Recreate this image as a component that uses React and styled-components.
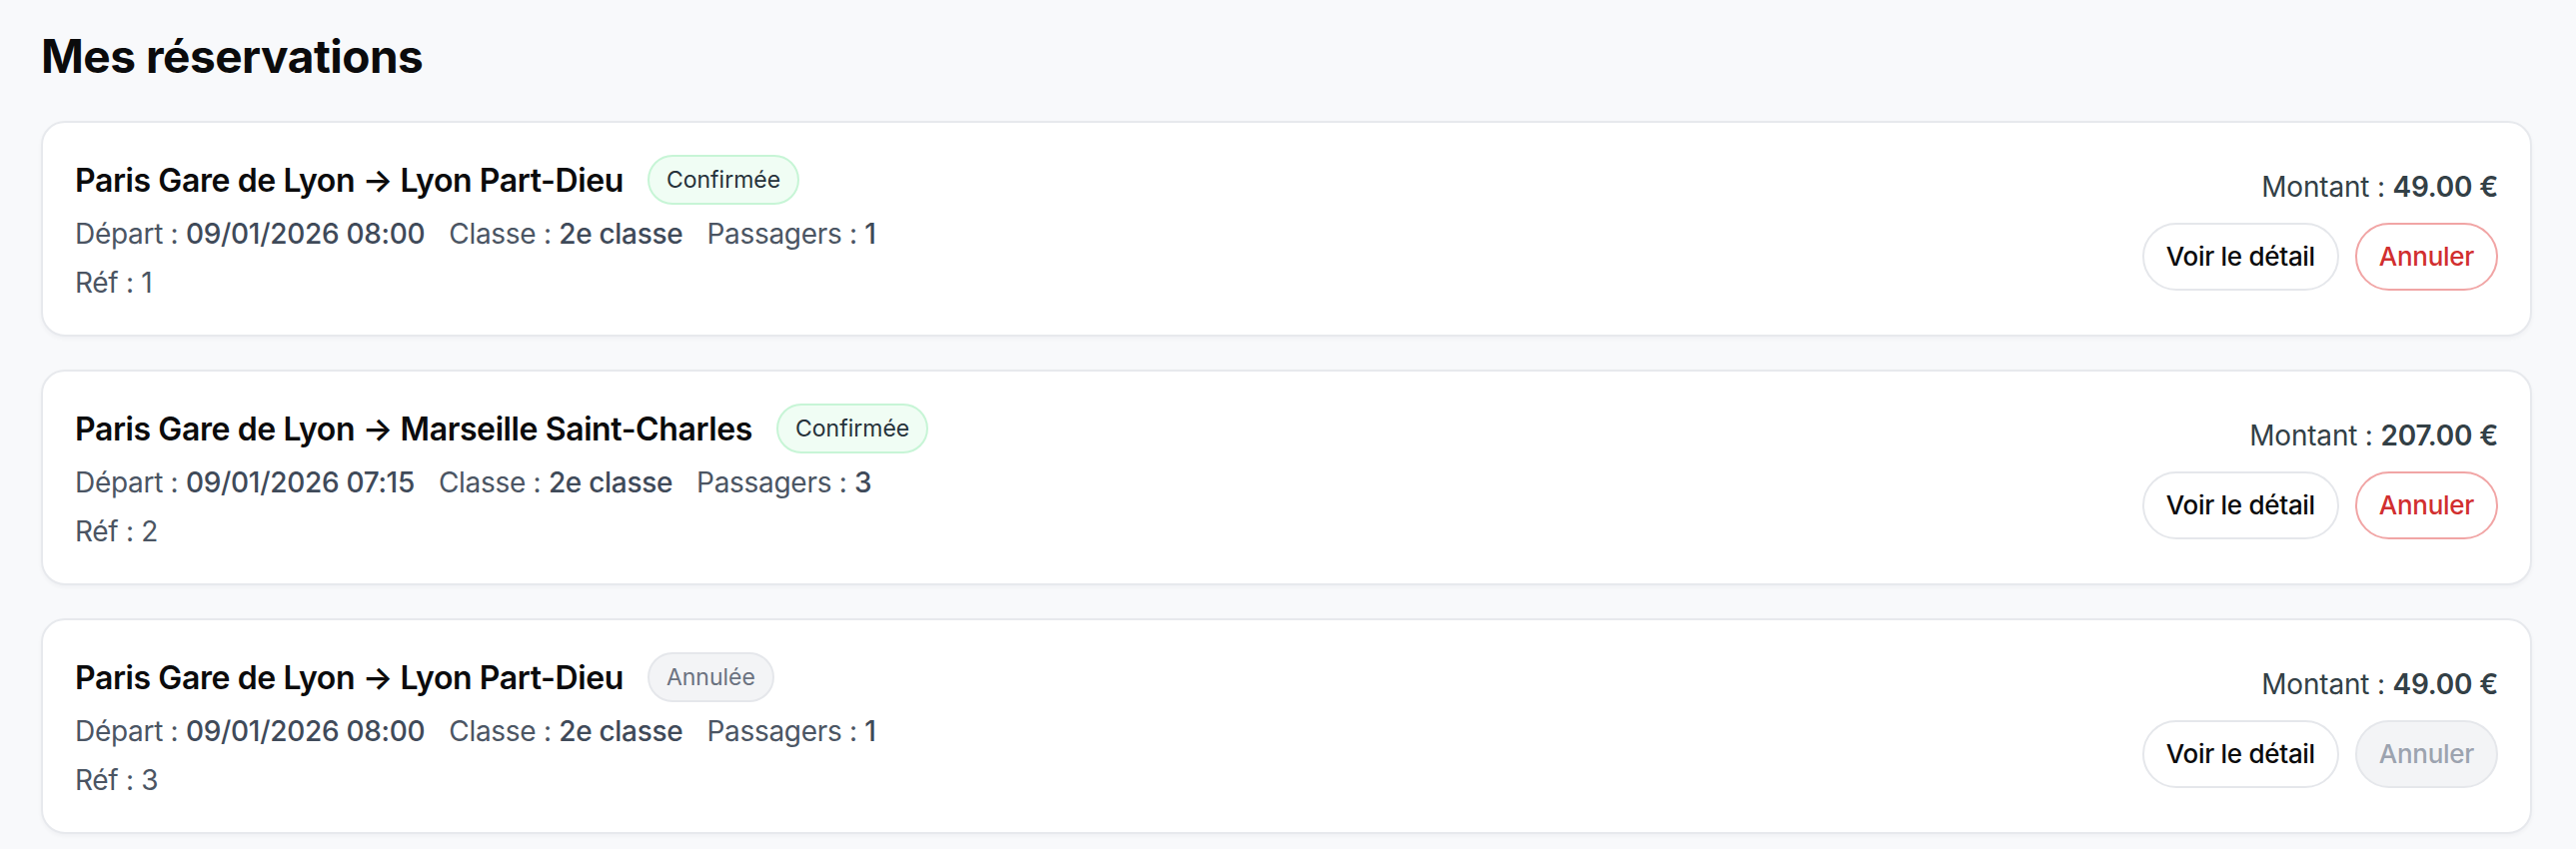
import React from "react";
import styled, { createGlobalStyle } from "styled-components";

const GlobalStyle = createGlobalStyle`
  html, body {
    margin: 0;
    padding: 0;
    background: #f8f9fb;
  }
  body {
    font-family: Inter, "Noto Sans", "Liberation Sans", sans-serif;
    color: #111827;
  }
`;

const Page = styled.main`
  padding: 28px 44px 40px 41px;
`;

const Title = styled.h1`
  font-size: 46px;
  font-weight: 700;
  letter-spacing: -0.5px;
  margin: 0 0 37px;
  color: #0b0b0c;
`;

const List = styled.div`
  display: flex;
  flex-direction: column;
  gap: 33px;
`;

const Card = styled.article`
  display: flex;
  align-items: center;
  justify-content: space-between;
  background: #ffffff;
  border: 2px solid #e7e9ed;
  border-radius: 24px;
  padding: 32px;
  box-shadow: 0 2px 4px rgba(17, 24, 39, 0.04);
`;

const Info = styled.div`
  display: flex;
  flex-direction: column;
`;

const Heading = styled.div`
  display: flex;
  align-items: center;
  gap: 24px;
  height: 50px;
`;

const Route = styled.h2`
  margin: 0;
  font-size: 32px;
  font-weight: 600;
  letter-spacing: -0.4px;
  color: #0b0b0c;
`;

const Badge = styled.span`
  display: inline-flex;
  align-items: center;
  height: 50px;
  box-sizing: border-box;
  padding: 0 17px;
  border-radius: 999px;
  font-size: 23px;
  font-weight: 400;
  border: 2px solid ${p => (p.$cancelled ? "#e5e7eb" : "#c7f5d6")};
  background: ${p => (p.$cancelled ? "#f3f4f6" : "#f0fdf4")};
  color: ${p => (p.$cancelled ? "#6b7280" : "#26323a")};
`;

const Details = styled.div`
  display: flex;
  gap: 24px;
  margin-top: 9px;
  font-size: 28px;
  line-height: 40px;
  color: #4b5563;
  letter-spacing: -0.3px;
`;

const Value = styled.span`
  font-weight: 500;
  color: #3f4a59;
`;

const Ref = styled.div`
  margin-top: 9px;
  font-size: 28px;
  line-height: 40px;
  color: #4b5563;
  letter-spacing: -0.3px;
`;

const Side = styled.div`
  display: flex;
  flex-direction: column;
  align-items: flex-end;
  gap: 16px;
`;

const Amount = styled.div`
  font-size: 28px;
  line-height: 39px;
  color: #334046;
  letter-spacing: -0.2px;

  strong {
    font-weight: 600;
  }
`;

const Actions = styled.div`
  display: flex;
  gap: 16px;
`;

const Button = styled.button`
  height: 68px;
  padding: 0 22px;
  border-radius: 999px;
  font-family: inherit;
  font-size: 26px;
  font-weight: 500;
  letter-spacing: -0.3px;
  background: #ffffff;
  border: 2px solid #e5e7eb;
  color: #0b0b0c;
  cursor: pointer;
`;

const CancelButton = styled(Button)`
  border-color: ${p => (p.disabled ? "#e5e7eb" : "#f1a5a5")};
  background: ${p => (p.disabled ? "#f3f4f6" : "#ffffff")};
  color: ${p => (p.disabled ? "#9ca3af" : "#d12f2f")};
  cursor: ${p => (p.disabled ? "not-allowed" : "pointer")};
`;

const reservations = [
  { id: 1, from: "Paris Gare de Lyon", to: "Lyon Part-Dieu", status: "Confirmée", date: "09/01/2026 08:00", classe: "2e classe", passengers: 1, amount: "49.00" },
  { id: 2, from: "Paris Gare de Lyon", to: "Marseille Saint-Charles", status: "Confirmée", date: "09/01/2026 07:15", classe: "2e classe", passengers: 3, amount: "207.00" },
  { id: 3, from: "Paris Gare de Lyon", to: "Lyon Part-Dieu", status: "Annulée", date: "09/01/2026 08:00", classe: "2e classe", passengers: 1, amount: "49.00" }
];

export default function App() {
  return (
    <>
      <GlobalStyle />
      <Page>
        <Title>Mes réservations</Title>
        <List>
          {reservations.map(r => {
            const cancelled = r.status === "Annulée";
            return (
              <Card key={r.id}>
                <Info>
                  <Heading>
                    <Route>
                      {r.from} → {r.to}
                    </Route>
                    <Badge $cancelled={cancelled}>{r.status}</Badge>
                  </Heading>
                  <Details>
                    <span>
                      Départ : <Value>{r.date}</Value>
                    </span>
                    <span>
                      Classe : <Value>{r.classe}</Value>
                    </span>
                    <span>
                      Passagers : <Value>{r.passengers}</Value>
                    </span>
                  </Details>
                  <Ref>Réf : {r.id}</Ref>
                </Info>
                <Side>
                  <Amount>
                    Montant : <strong>{r.amount} €</strong>
                  </Amount>
                  <Actions>
                    <Button>Voir le détail</Button>
                    <CancelButton disabled={cancelled}>Annuler</CancelButton>
                  </Actions>
                </Side>
              </Card>
            );
          })}
        </List>
      </Page>
    </>
  );
}
